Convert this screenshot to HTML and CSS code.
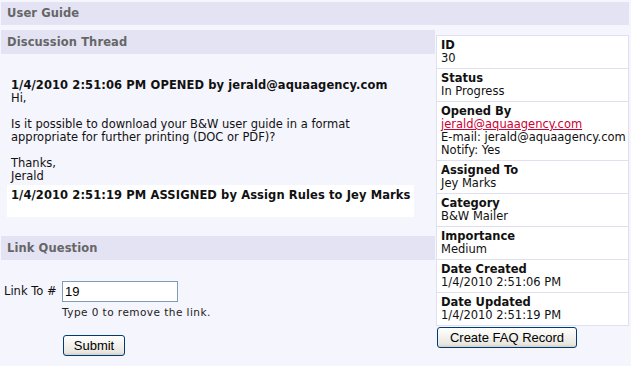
FILE: index.html
```html
<!DOCTYPE html>
<html>
<head>
<meta charset="utf-8">
<link rel="stylesheet" href="styles.css">
</head>
<body>
<div class="page">
  <div class="bar bar-top">User Guide</div>
  <div class="main">
    <div class="left">
      <div class="bar bar-sub">Discussion Thread</div>
      <div class="thread">
        <div class="entry">
          <div class="entry-title">1/4/2010 2:51:06 PM OPENED by jerald@aquaagency.com</div>
          <div class="entry-body">Hi,<br><br>Is it possible to download your B&amp;W user guide in a format appropriate for further printing (DOC or PDF)?<br><br>Thanks,<br>Jerald</div>
        </div>
        <div class="entry entry-alt">
          <div class="entry-title">1/4/2010 2:51:19 PM ASSIGNED by Assign Rules to Jey Marks</div>
          <div class="entry-body">&nbsp;</div>
        </div>
      </div>
      <div class="bar bar-sub bar-link">Link Question</div>
      <form class="link-form">
        <label class="link-label" for="linkto">Link To #</label>
        <div class="link-field">
          <input id="linkto" class="text-input" type="text" value="19">
          <div class="hint">Type 0 to remove the link.</div>
          <button type="button" class="btn btn-submit">Submit</button>
        </div>
      </form>
    </div>
    <div class="right">
      <div class="props">
        <div class="prop"><div class="prop-name">ID</div><div class="prop-val">30</div></div>
        <div class="prop"><div class="prop-name">Status</div><div class="prop-val">In Progress</div></div>
        <div class="prop"><div class="prop-name">Opened By</div><div class="prop-val"><a href="#" class="mail">jerald@aquaagency.com</a><br>E-mail: jerald@aquaagency.com<br>Notify: Yes</div></div>
        <div class="prop"><div class="prop-name">Assigned To</div><div class="prop-val">Jey Marks</div></div>
        <div class="prop"><div class="prop-name">Category</div><div class="prop-val">B&amp;W Mailer</div></div>
        <div class="prop"><div class="prop-name">Importance</div><div class="prop-val">Medium</div></div>
        <div class="prop"><div class="prop-name">Date Created</div><div class="prop-val">1/4/2010 2:51:06 PM</div></div>
        <div class="prop"><div class="prop-name">Date Updated</div><div class="prop-val">1/4/2010 2:51:19 PM</div></div>
      </div>
      <button type="button" class="btn btn-faq">Create FAQ Record</button>
    </div>
  </div>
</div>
</body>
</html>
```

FILE: styles.css
```css
html, body {
  margin: 0;
  padding: 0;
  background: #f5f5fd;
}
body {
  font-family: Verdana, "DejaVu Sans", sans-serif;
  font-size: 11.5px;
  line-height: 13px;
  color: #111;
}
.page {
  padding: 2px 2px 0 1px;
}
.bar {
  background: #e3e3f3;
  color: #666;
  font-weight: bold;
  letter-spacing: 0.1px;
  padding-left: 6px;
}
.bar-top {
  height: 23px;
  line-height: 23px;
}
.bar-sub {
  height: 24px;
  line-height: 24px;
}
.main {
  display: flex;
  gap: 1px;
  margin-top: 5px;
}
.left {
  width: 434px;
  flex: none;
}
.thread {
  margin: 21px 21px 19px 6px;
}
.entry {
  padding: 4px 4px 2px 4px;
}
.entry-alt {
  background: #fff;
}
.entry-title {
  font-weight: bold;
  letter-spacing: 0.1px;
  white-space: nowrap;
}
.entry-body {
  padding-right: 8px;
}
.link-form {
  display: flex;
  margin-top: 21px;
  padding-left: 3px;
}
.link-label {
  width: 58px;
  flex: none;
  line-height: 21px;
}
.link-field {
  display: flex;
  flex-direction: column;
  align-items: flex-start;
}
.text-input {
  box-sizing: border-box;
  width: 116px;
  height: 21px;
  margin: 0;
  border: 1px solid #7f9db9;
  padding: 0 2px;
  font-family: "Liberation Sans", Arial, sans-serif;
  font-size: 13px;
  background: #fff;
  color: #000;
}
.hint {
  font-size: 10.5px;
  letter-spacing: 0.45px;
  margin-top: 4px;
  line-height: 13px;
  color: #222;
}
.btn {
  box-sizing: border-box;
  height: 21px;
  margin: 0;
  padding: 0;
  border: 1px solid #003c74;
  border-radius: 3px;
  background: linear-gradient(#ffffff, #f3f2ee 45%, #e8e6df 85%, #d6d0c5);
  font-family: "Liberation Sans", Arial, sans-serif;
  font-size: 13px;
  color: #000;
}
.btn-submit {
  width: 62px;
  margin-top: 16px;
  margin-left: 1px;
}
.right {
  width: 193px;
  flex: none;
  margin-top: 5px;
}
.props {
  border: 1px solid #e0e0f2;
  border-top: none;
  background: #fff;
}
.prop {
  border-top: 1px solid #e0e0f2;
  padding: 3px 4px 3px 4px;
  white-space: nowrap;
}
.prop-name {
  font-weight: bold;
}
.mail {
  color: #cc0033;
  text-decoration: underline;
}
.btn-faq {
  width: 140px;
  margin-top: 1px;
  margin-left: 1px;
}
```
